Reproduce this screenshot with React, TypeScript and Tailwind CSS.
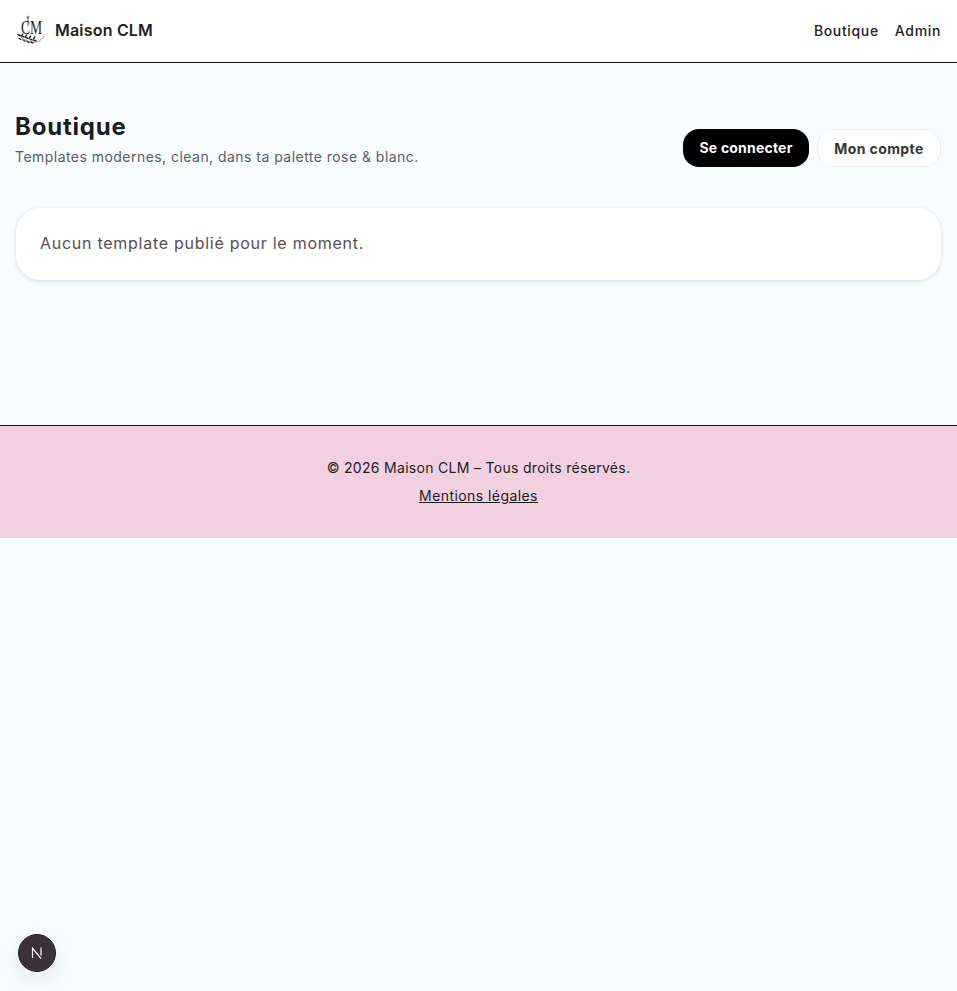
const font = "[font-family:Inter,'Liberation_Sans',sans-serif]";

// leaf positions along the laurel sprig
const leaves = [
  [3, 20, 20], [7, 21.5, 20], [11, 23, 20], [15, 24.5, 20], [19, 25.5, 15],
  [4, 24, 35], [8, 25.5, 35], [12, 27, 30], [16, 27.5, 25],
  [6, 20, -50], [10, 21, -50], [14, 22, -50], [18, 23, -50],
];

function Logo() {
  return (
    <svg width="30" height="31" viewBox="0 0 30 31" fill="none" className="shrink-0">
      <text
        transform="translate(5 19) scale(0.85 1.2)"
        fontFamily="Liberation Serif, serif"
        fontSize="16"
        fill="#222"
      >
        CM
      </text>
      <path d="M12 2v9" stroke="#222" strokeWidth="0.7" />
      <circle cx="12" cy="2.2" r="1.1" stroke="#222" strokeWidth="0.5" />
      <path d="M2 20c6 5 12 8 19 7 3-1 5-3 7-6" stroke="#333" strokeWidth="0.5" />
      {leaves.map(([x, y, r]) => (
        <ellipse key={`${x}-${y}`} cx={x} cy={y} rx="2" ry="0.7" fill="#222" transform={`rotate(${r} ${x} ${y})`} />
      ))}
    </svg>
  );
}

export default function App() {
  return (
    <div className={`min-h-screen bg-[#f8fcff] text-[#1c1c1e] ${font}`}>
      {/* Header */}
      <header className="flex h-[63px] items-center justify-between border-b border-[#111] bg-white px-4 pb-0.5">
        <div className="flex items-center gap-[9px]">
          <Logo />
          <span className="text-[16px] font-semibold tracking-[0.2px] text-[#222]">Maison CLM</span>
        </div>
        <nav className="flex items-center gap-4 text-[14px] font-medium tracking-[0.66px] text-[#222]">
          <a>Boutique</a>
          <a>Admin</a>
        </nav>
      </header>

      {/* Main */}
      <main className="min-h-[362px] px-4 pt-12">
        <div className="flex items-end justify-between">
          <div>
            <h1 className="-ml-px text-[24px] leading-8 font-bold tracking-[0.8px] text-[#1c1c1e]">Boutique</h1>
            <p className="mt-1 -ml-px text-[14px] leading-5 tracking-[0.46px] text-[#5c5c62]">
              Templates modernes, clean, dans ta palette rose &amp; blanc.
            </p>
          </div>
          <div className="flex items-center gap-2">
            <button className="h-[38px] w-[126px] rounded-2xl bg-black pb-0.5 text-[14px] font-bold tracking-[0.2px] text-white">
              Se connecter
            </button>
            <button className="h-[38px] w-[124px] rounded-2xl border border-[#eceef0] bg-white text-[14px] font-bold tracking-[0.4px] text-[#3a3638]">
              Mon compte
            </button>
          </div>
        </div>

        <div className="mt-[41px] rounded-3xl bg-white px-6 pt-[23px] pb-[25px] shadow-[0_1px_4px_rgba(0,0,0,0.14)]">
          <p className="text-[16px] leading-6 tracking-[0.73px] text-[#55504f]">
            Aucun template publié pour le moment.
          </p>
        </div>
      </main>

      {/* Footer */}
      <footer className="flex h-[113px] flex-col items-center border-t border-[#111] bg-[#f2d0e2] pt-[32px] text-[14px] text-[#1c1c1e]">
        <p className="leading-5 tracking-[0.3px]">© 2026 Maison CLM – Tous droits réservés.</p>
        <a className="mt-2 leading-5 tracking-[0.43px] underline">Mentions légales</a>
      </footer>

      {/* Dev badge */}
      <div className="fixed bottom-[19px] left-[18px] flex h-[38px] w-[38px] items-center justify-center rounded-full border border-[#222] bg-[#3a3238] shadow-[0_8px_24px_rgba(0,0,0,0.08)]">
        <svg width="14" height="14" viewBox="0 0 14 14" fill="none">
          <path d="M2.5 12V2.2L11 12.5M11 1.5v8" stroke="#fff" strokeWidth="1.2" />
        </svg>
      </div>
    </div>
  );
}
